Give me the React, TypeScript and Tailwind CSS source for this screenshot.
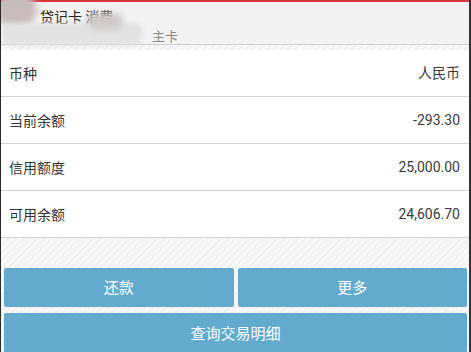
const rows = [
  { label: "币种", value: "人民币" },
  { label: "当前余额", value: "-293.30" },
  { label: "信用额度", value: "25,000.00" },
  { label: "可用余额", value: "24,606.70" },
];

const stripes =
  "bg-[repeating-linear-gradient(135deg,#f1f1f1_0px,#f1f1f1_2px,#f8f8f8_2px,#f8f8f8_5px)]";

export default function App() {
  return (
    <div
      className="relative w-[471px] h-[352px] overflow-hidden bg-white border-r-2 border-r-[#333] border-l border-l-[#2a2a2a]"
      style={{ fontFamily: '"Noto Sans CJK SC", "Noto Sans", sans-serif' }}
    >
      {/* header */}
      <div className="h-[2px] bg-[#d9363e]" />
      <div className="relative h-[43px] bg-[#f2f2f2] border-b border-[#cfcfcf]">
        <div className="pl-[39px] pt-[4px] text-[14px] leading-[20px] text-[#222]">贷记卡 消费</div>
        <div className="pl-[151px] pt-[1px] text-[13px] leading-[18px] text-[#888]">主卡</div>

        {/* redaction blobs */}
        <div className="absolute -left-[6px] -top-[8px] w-[42px] h-[32px] rounded-full bg-[#c8bcbd] blur-[3px]" />
        <div className="absolute left-[0px] top-[21px] w-[142px] h-[22px] rounded-full bg-[#e2e2e2] blur-[2px]" />
        <div className="absolute left-[86px] top-[11px] w-[36px] h-[16px] rounded-full bg-[#d0c9ca] blur-[3px]" />
      </div>
      <div className={`h-[5px] ${stripes}`} />

      {/* details */}
      <div className="bg-white">
        {rows.map((r) => (
          <div
            key={r.label}
            className="flex items-center justify-between h-[47px] pl-[8px] pr-[9px] border-b border-[#d4d4d4] text-[14px] text-[#333]"
          >
            <span>{r.label}</span>
            <span className="text-[#3a3a3a]" style={{ fontFamily: 'Roboto, "Noto Sans CJK SC", sans-serif' }}>
              {r.value}
            </span>
          </div>
        ))}
      </div>

      {/* actions */}
      <div className={`flex flex-col gap-[6px] pt-[30px] pl-[3px] pr-[2px] pb-[10px] ${stripes}`}>
        <div className="flex gap-[4px]">
          <button className="flex-1 h-[39px] rounded-[2px] bg-[#62abcf] text-white text-[15px]">还款</button>
          <button className="flex-1 h-[39px] rounded-[2px] bg-[#62abcf] text-white text-[15px]">更多</button>
        </div>
        <button className="h-[40px] rounded-[2px] bg-[#62abcf] text-white text-[15px]">查询交易明细</button>
      </div>
    </div>
  );
}
